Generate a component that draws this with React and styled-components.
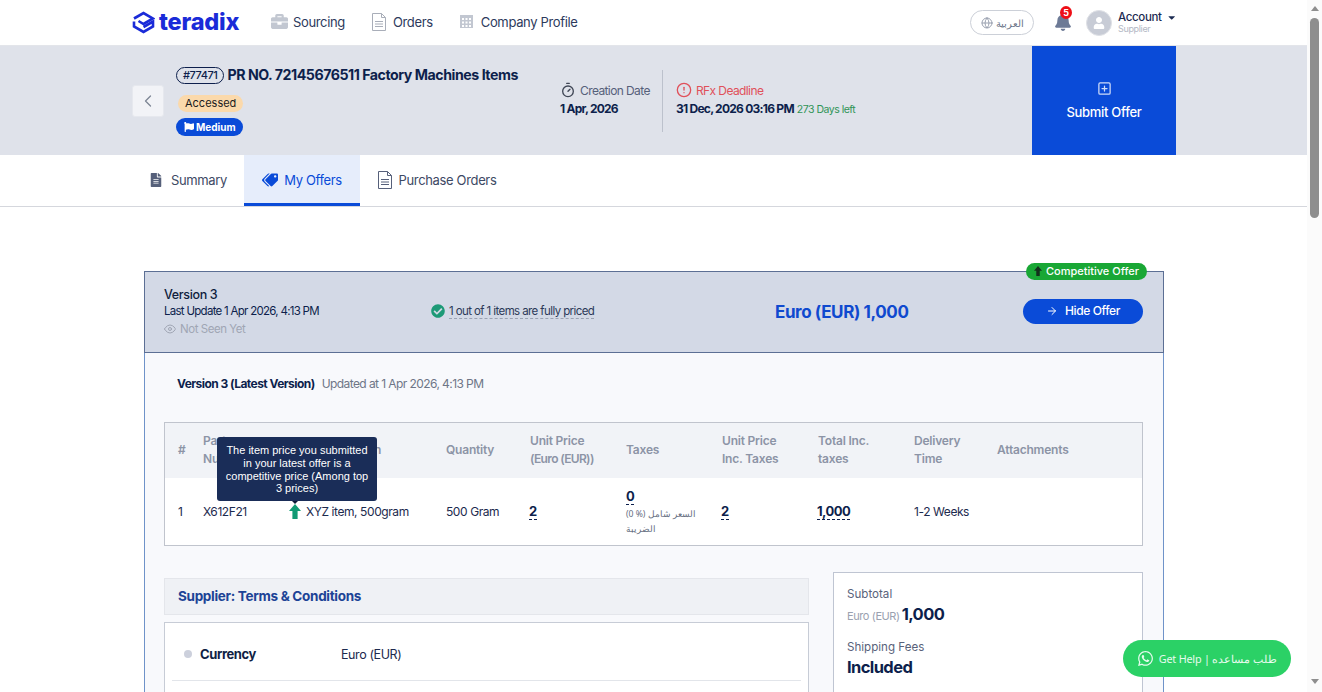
import styled, { createGlobalStyle } from "styled-components";
import { FaBriefcase, FaBell, FaCaretDown, FaCheckCircle, FaFileAlt, FaFlag, FaTags, FaUser, FaWhatsapp } from "react-icons/fa";
import { FiAlertCircle, FiArrowRight, FiChevronLeft, FiEye, FiGlobe, FiPlusSquare } from "react-icons/fi";
import { LuTimer } from "react-icons/lu";

const GlobalStyle = createGlobalStyle`
  body {
    margin: 0;
    background: #fff;
    color: #0d1f4c;
    font-family: "Inter", "Noto Sans", sans-serif;
    font-size: 12px;
    letter-spacing: -0.35px;
  }
  * { box-sizing: border-box; }
`;

const Shell = styled.div`
  display: flex;
  align-items: flex-start;
`;

const Main = styled.main`
  flex: 1;
  min-width: 0;
`;

const ScrollRail = styled.div`
  position: sticky;
  top: 0;
  flex: none;
  width: 15px;
  height: 692px;
  padding: 6px 3px 8px;
  background: #fbfbfb;
  display: flex;
  flex-direction: column;
  align-items: center;
`;

const RailArrow = styled.span`
  width: 0;
  height: 0;
  border-left: 4.5px solid transparent;
  border-right: 4.5px solid transparent;
  border-bottom: ${props => props.$down ? "0" : "5px solid #8e8e8e"};
  border-top: ${props => props.$down ? "5px solid #8e8e8e" : "0"};
  margin-top: ${props => props.$down ? "auto" : "0"};
`;

const RailThumb = styled.div`
  width: 9px;
  height: 200px;
  margin-top: 7px;
  border-radius: 5px;
  background: #8e8e8e;
`;

const Wrap = styled.div`
  width: 1044px;
  margin-left: 132px;
`;

const TopBar = styled.header`
  height: 46px;
  background: #fff;
  border-bottom: 1px solid #e3e5ea;
`;

const TopInner = styled(Wrap)`
  height: 45px;
  display: flex;
  align-items: center;
`;

const Logo = styled.div`
  display: flex;
  align-items: center;
  gap: 4px;
  width: 139px;
  color: #1a2bd8;
  font-size: 23.5px;
  font-weight: 800;
  letter-spacing: -0.2px;
  line-height: 1;
  & svg { flex: none; }
  & span { margin-top: -2px; }
`;

const Nav = styled.nav`
  display: flex;
  align-items: center;
  padding-bottom: 2px;
`;

const NavItem = styled.a`
  display: flex;
  align-items: center;
  gap: ${props => props.$gap || 7}px;
  margin-right: ${props => props.$space}px;
  font-size: 13px;
  color: #2d3a5c;
  & svg { color: #c2c7d1; flex: none; }
`;

const TopRight = styled.div`
  margin-left: auto;
  display: flex;
  align-items: center;
`;

const LangButton = styled.button`
  width: 64px;
  height: 25px;
  border: 1px solid #ccd0d8;
  border-radius: 13px;
  background: #fff;
  color: #6b7488;
  display: flex;
  align-items: center;
  justify-content: center;
  gap: 3px;
  font-family: "Noto Sans", sans-serif;
  font-size: 10px;
  padding: 0;
  & svg { color: #9aa1b0; }
`;

const BellWrap = styled.div`
  position: relative;
  margin-left: 20px;
  width: 18px;
  height: 20px;
  color: #6d7a96;
`;

const Badge = styled.span`
  position: absolute;
  top: -7px;
  left: 6px;
  width: 12px;
  height: 13px;
  border-radius: 50%;
  background: #ee0f17;
  color: #fff;
  font-size: 9px;
  font-weight: 700;
  text-align: center;
  line-height: 13px;
`;

const Avatar = styled.div`
  width: 26px;
  height: 26px;
  margin-left: 14px;
  border-radius: 50%;
  background: #c8ccd6;
  border: 1px solid #dfe1e6;
  color: #fff;
  display: flex;
  align-items: center;
  justify-content: center;
`;

const AccountBox = styled.div`
  margin-left: 6px;
  width: 58px;
  line-height: 1;
`;

const AccountName = styled.div`
  display: flex;
  align-items: center;
  gap: 5px;
  font-size: 11.5px;
  font-weight: 500;
  color: #1c2b52;
`;

const AccountRole = styled.div`
  margin-top: 1px;
  font-size: 9px;
  color: #b3b8c4;
`;

const SubHeader = styled.section`
  background: #dfe2ea;
  height: 109px;
`;

const SubInner = styled(Wrap)`
  height: 109px;
  display: flex;
  align-items: stretch;
`;

const BackButton = styled.button`
  align-self: center;
  width: 32px;
  height: 32px;
  margin-top: 1px;
  padding: 0;
  background: #f2f3f7;
  border: 1px solid #e6e8ee;
  border-radius: 3px;
  color: #7d8595;
  display: flex;
  align-items: center;
  justify-content: center;
`;

const TitleBlock = styled.div`
  margin-left: 12px;
  padding-top: 20px;
  width: 384px;
  display: flex;
  flex-direction: column;
  align-items: flex-start;
`;

const TitleRow = styled.div`
  display: flex;
  align-items: center;
  gap: 3px;
  font-size: 14.2px;
  font-weight: 700;
  line-height: 18px;
  letter-spacing: -0.47px;
  white-space: nowrap;
`;

const IdPill = styled.span`
  border: 1px solid #0d1f4c;
  border-radius: 9px;
  padding: 0 6px;
  height: 17px;
  font-size: 11px;
  font-weight: 500;
  line-height: 15px;
`;

const StatusPill = styled.div`
  margin: 11px 0 0 2px;
  height: 17px;
  padding: 0 7px;
  border-radius: 9px;
  background: #fbd9ab;
  color: #1b1b1b;
  font-size: 11px;
  line-height: 17px;
  letter-spacing: 0;
`;

const PriorityPill = styled.div`
  display: flex;
  align-items: center;
  gap: 2px;
  margin-top: 6px;
  height: 18px;
  padding: 0 7px 0 8px;
  border-radius: 9px;
  background: #0a4bd8;
  color: #fff;
  font-size: 10px;
  font-weight: 700;
  letter-spacing: 0;
`;

const DateBlock = styled.div`
  padding-top: 36px;
  width: ${props => props.$width ? props.$width + "px" : "auto"};
`;

const DateLabel = styled.div`
  display: flex;
  align-items: center;
  gap: 4px;
  font-size: 12px;
  height: 16px;
  letter-spacing: -0.6px;
  color: ${props => props.$danger ? "#e0505a" : "#56607a"};
  & svg { flex: none; }
`;

const DateValue = styled.div`
  margin-top: 3px;
  font-size: 12px;
  font-weight: 700;
  line-height: 16px;
  white-space: nowrap;
  letter-spacing: -0.75px;
`;

const DaysLeft = styled.span`
  margin-left: 3px;
  font-size: 10.5px;
  font-weight: 400;
  letter-spacing: -0.5px;
  color: #2f9457;
`;

const DateDivider = styled.div`
  align-self: center;
  width: 1px;
  height: 62px;
  margin: 0 13px 0 0;
  background: #bcc1cc;
`;

const SubmitButton = styled.button`
  margin-left: auto;
  width: 144px;
  border: 0;
  background: #0a4bd8;
  color: #fff;
  font-family: inherit;
  font-size: 13px;
  font-weight: 500;
  letter-spacing: -0.3px;
  display: flex;
  flex-direction: column;
  align-items: center;
  justify-content: center;
  gap: 8px;
  padding-bottom: 2px;
  & svg { color: #cfdcf8; }
`;

const TabBar = styled.div`
  height: 52px;
  border-bottom: 1px solid #d5d7dd;
`;

const TabInner = styled(Wrap)`
  display: flex;
  height: 51px;
`;

const Tab = styled.a`
  display: flex;
  align-items: center;
  justify-content: center;
  gap: ${props => props.$gap || 7}px;
  width: ${props => props.$width}px;
  font-size: 13px;
  color: ${props => props.$active ? "#0a4bd8" : "#3d4964"};
  background: ${props => props.$active ? "#e6edfb" : "transparent"};
  border-bottom: 3px solid ${props => props.$active ? "#0a4bd8" : "transparent"};
  padding-top: 1px;
  & svg { color: ${props => props.$active ? "#0a4bd8" : "#56607a"}; flex: none; }
`;

const FlippedTags = styled(FaTags)`
  transform: scaleX(-1);
`;

const Content = styled(Wrap)`
  padding: 64px 12px 0;
  height: 2190px;
`;

const Panel = styled.div`
  border: 1px solid #6f93c9;
  background: #f8f9fc;
  height: 100%;
`;

const PanelHead = styled.div`
  position: relative;
  margin: -1px;
  height: 82px;
  padding: 0 19px;
  background: #d3d9e6;
  border: 1px solid #5c6f94;
  display: flex;
  align-items: center;
`;

const CompetitiveBadge = styled.span`
  position: absolute;
  top: -9px;
  right: 16px;
  height: 17px;
  width: 121px;
  padding-bottom: 2px;
  border-radius: 9px;
  background: #19a735;
  color: #fff;
  display: flex;
  align-items: center;
  justify-content: center;
  gap: 4px;
  font-size: 11px;
  font-weight: 500;
  letter-spacing: 0;
  & svg { color: #13301c; }
`;

const VersionInfo = styled.div`
  width: 267px;
  line-height: 17px;
`;

const VersionName = styled.div`
  margin-top: -1px;
  font-size: 12.5px;
  font-weight: 500;
  color: #0f1d3d;
`;

const VersionDate = styled.div`
  font-size: 11.5px;
  letter-spacing: -0.72px;
`;

const NotSeen = styled.div`
  display: flex;
  align-items: center;
  gap: 4px;
  margin-top: 1px;
  font-size: 11.5px;
  color: #a0a6b4;
  letter-spacing: -0.45px;
`;

const PricedNote = styled.div`
  display: flex;
  align-items: center;
  gap: 4px;
  width: 344px;
  margin-top: -2px;
  font-size: 11.5px;
  letter-spacing: -0.6px;
  color: #2c3958;
  & svg { color: #1d9a77; }
`;

const DashedText = styled.span`
  border-bottom: 1px dashed ${props => props.$color || "#9aa2b3"};
`;

const PanelTotal = styled.div`
  font-size: 17px;
  font-weight: 700;
  letter-spacing: -0.4px;
  color: #0f49cf;
  margin-top: -1px;
`;

const HideButton = styled.button`
  position: absolute;
  top: 27px;
  right: 20px;
  width: 120px;
  height: 25px;
  padding: 0 0 2px;
  border: 0;
  border-radius: 13px;
  background: #0a4bd8;
  color: #fff;
  font-family: inherit;
  font-size: 12px;
  font-weight: 500;
  letter-spacing: -0.4px;
  display: flex;
  align-items: center;
  justify-content: center;
  gap: 7px;
`;

const PanelBody = styled.div`
  padding: 23px 20px 0 19px;
`;

const LatestLine = styled.div`
  margin-left: 13px;
  font-size: 12px;
  line-height: 18px;
  color: #6e7687;
  letter-spacing: -0.58px;
  & b { color: #0d1f4c; margin-right: 7px; font-weight: 700; letter-spacing: -0.55px; }
`;

const OfferTable = styled.div`
  margin-top: 29px;
  border: 1px solid #c0c4cd;
  background: #fff;
`;

const TableRow = styled.div`
  display: grid;
  grid-template-columns: 38px 85px 158px 84px 96px 96px 96px 96px 83px 1fr;
  align-items: center;
  height: ${props => props.$head ? 55 : 67}px;
  background: ${props => props.$head ? "#f1f3f7" : "#fff"};
`;

const HeadCell = styled.div`
  padding: 0 0 2px ${props => props.$pad || 0}px;
  font-size: 12px;
  font-weight: 600;
  line-height: 18px;
  letter-spacing: -0.2px;
  color: #8c94a6;
`;

const TightHead = styled.span`
  letter-spacing: -0.65px;
`;

const Cell = styled.div`
  position: relative;
  padding-left: ${props => props.$pad || 0}px;
  font-size: 12px;
  letter-spacing: -0.42px;
  color: #1c2a4e;
  display: ${props => props.$flex ? "flex" : "block"};
  align-items: center;
  gap: 5px;
`;

const ArrowMark = styled.span`
  position: relative;
  display: flex;
  color: #119a74;
`;

const Tooltip = styled.div`
  position: absolute;
  left: -72px;
  bottom: 18px;
  width: 160px;
  padding: 7px 5px 6px;
  border-radius: 3px;
  background: #1a2d58;
  color: #fff;
  font-family: "Liberation Sans", Arial, sans-serif;
  font-size: 11px;
  line-height: 12.7px;
  letter-spacing: 0;
  text-align: center;
  &::after {
    content: "";
    position: absolute;
    left: 75px;
    bottom: -3px;
    border: 3px solid transparent;
    border-bottom: 0;
    border-top-color: #0c1a38;
  }
`;

const Amount = styled.span`
  font-size: 13px;
  font-weight: 700;
  color: #0d1f4c;
  letter-spacing: -0.5px;
`;

const AmountCell = styled(Cell)`
  margin-top: -1px;
  margin-left: -1px;
  padding-left: 0;
`;

const TaxCell = styled(Cell)`
  margin-top: 1px;
`;

const TaxNote = styled.div`
  margin-top: 3px;
  width: 80px;
  font-size: 8.6px;
  line-height: 14.5px;
  color: #666e7f;
  font-family: "Noto Sans", sans-serif;
  letter-spacing: 0;
`;

const LowerGrid = styled.div`
  display: grid;
  grid-template-columns: 645px 310px;
  gap: 24px;
  margin-top: 26px;
`;

const TermsHead = styled.div`
  margin-top: 6px;
  height: 37px;
  padding-left: 13px;
  background: #eff1f5;
  border: 1px solid #e4e6eb;
  color: #1c4396;
  font-size: 13.5px;
  font-weight: 700;
  letter-spacing: -0.3px;
  line-height: 35px;
`;

const TermsBox = styled.div`
  margin-top: 7px;
  height: 300px;
  padding: 0 7px;
  background: #fff;
  border: 1px solid #c7ccd6;
`;

const TermRow = styled.div`
  display: flex;
  align-items: center;
  height: 58px;
  padding: 4px 0 0 12px;
  border-bottom: 1px solid #e2e5ea;
`;

const TermLabel = styled.div`
  display: flex;
  align-items: center;
  gap: 8px;
  width: 157px;
  font-size: 13px;
  font-weight: 700;
  letter-spacing: -0.4px;
  color: #101f45;
  &::before {
    content: "";
    width: 8px;
    height: 8px;
    border-radius: 50%;
    background: #ccd0dc;
  }
`;

const TermValue = styled.div`
  margin-top: 1px;
  font-size: 12.5px;
  letter-spacing: -0.4px;
  color: #1c2a4e;
`;

const SummaryBox = styled.div`
  height: 340px;
  padding: 13px 13px;
  background: #fff;
  border: 1px solid #bfc5d2;
`;

const SummaryLabel = styled.div`
  font-size: 11.6px;
  line-height: 16px;
  color: #59627a;
  letter-spacing: 0;
`;

const SummaryValue = styled.div`
  display: flex;
  align-items: baseline;
  gap: 2px;
  height: 24px;
  margin-bottom: 13px;
  font-size: 16.5px;
  font-weight: 700;
  line-height: 24px;
  letter-spacing: -0.6px;
  color: #0d1f4c;
  & small {
    font-size: 11px;
    font-weight: 400;
    letter-spacing: -0.4px;
    color: #9aa1b0;
  }
`;

const HelpButton = styled.a`
  position: fixed;
  right: 31px;
  bottom: 15px;
  width: 168px;
  height: 37px;
  border-radius: 19px;
  background: #2bd166;
  color: #e6fbee;
  display: flex;
  align-items: center;
  justify-content: center;
  gap: 5px;
  font-size: 10.8px;
  font-family: "Noto Sans", sans-serif;
  letter-spacing: -0.2px;
`;

const LogoMark = () => (
  <svg width="23" height="23" viewBox="0 0 23 23" fill="none" stroke="#1a2bd8" strokeWidth="2.6" strokeLinejoin="miter">
    <path d="M2 7.5 11.5 2 21 7.5 11.5 13 6.5 10" />
    <path d="M2 10.5 2 15.5 11.5 21 21 15.5 21 10.5 11.5 16" />
  </svg>
);

const DocIcon = ({ color }) => (
  <svg width="14" height="18" viewBox="0 0 14 18" fill="none" stroke={color} strokeWidth="1">
    <path d="M.5.5h9l4 4v13H.5z" />
    <path d="M9.5.5v4h4M3 8.5h8M3 11h8M3 13.5h8" />
  </svg>
);

const BuildingIcon = () => (
  <svg width="13" height="13" viewBox="0 0 13 13" fill="currentColor">
    <path fillRule="evenodd" d="M0 0h13v13H0zM2 3v2h2V3zm3.5 0v2h2V3zM9 3v2h2V3zM2 6.5v2h2v-2zm3.5 0v2h2v-2zm3.5 0v2h2v-2zM2 10v2h2v-2zm3.5 0v2h2v-2zM9 10v2h2v-2z" />
  </svg>
);

const FatArrow = ({ width, height }) => (
  <svg width={width} height={height} viewBox="0 0 12 15" fill="currentColor">
    <path d="M6 0 12 7H8.6V15H3.4V7H0z" />
  </svg>
);

export default function App() {
  return (
    <Shell>
      <GlobalStyle />
      <Main>
        <TopBar>
          <TopInner>
            <Logo><LogoMark /><span>teradix</span></Logo>
            <Nav>
              <NavItem $gap={5} $space={27}><FaBriefcase size={17} />Sourcing</NavItem>
              <NavItem $space={27}><DocIcon color="#a9aeb9" />Orders</NavItem>
              <NavItem $gap={8} $space={0}><BuildingIcon />Company Profile</NavItem>
            </Nav>
            <TopRight>
              <LangButton><FiGlobe size={12} />العربية</LangButton>
              <BellWrap>
                <FaBell size={18} />
                <Badge>5</Badge>
              </BellWrap>
              <Avatar><FaUser size={12} /></Avatar>
              <AccountBox>
                <AccountName>Account <FaCaretDown size={11} /></AccountName>
                <AccountRole>Supplier</AccountRole>
              </AccountBox>
            </TopRight>
          </TopInner>
        </TopBar>

        <SubHeader>
          <SubInner>
            <BackButton><FiChevronLeft size={20} strokeWidth={1.5} /></BackButton>
            <TitleBlock>
              <TitleRow>
                <IdPill>#77471</IdPill>
                PR NO. 72145676511 Factory Machines Items
              </TitleRow>
              <StatusPill>Accessed</StatusPill>
              <PriorityPill><FaFlag size={10} />Medium</PriorityPill>
            </TitleBlock>
            <DateBlock $width={102}>
              <DateLabel><LuTimer size={16} color="#3f4655" />Creation Date</DateLabel>
              <DateValue>1 Apr, 2026</DateValue>
            </DateBlock>
            <DateDivider />
            <DateBlock>
              <DateLabel $danger><FiAlertCircle size={16} />RFx Deadline</DateLabel>
              <DateValue>31 Dec, 2026 03:16 PM<DaysLeft>273 Days left</DaysLeft></DateValue>
            </DateBlock>
            <SubmitButton><FiPlusSquare size={15} />Submit Offer</SubmitButton>
          </SubInner>
        </SubHeader>

        <TabBar>
          <TabInner>
            <Tab $width={112} $gap={8}><FaFileAlt size={14} />Summary</Tab>
            <Tab $width={116} $active $gap={6}><FlippedTags size={16} />My Offers</Tab>
            <Tab $width={154}><DocIcon color="#56607a" />Purchase Orders</Tab>
          </TabInner>
        </TabBar>

        <Content>
          <Panel>
            <PanelHead>
              <CompetitiveBadge><FatArrow width={8} height={10} />Competitive Offer</CompetitiveBadge>
              <VersionInfo>
                <VersionName>Version 3</VersionName>
                <VersionDate>Last Update 1 Apr 2026, 4:13 PM</VersionDate>
                <NotSeen><FiEye size={12} />Not Seen Yet</NotSeen>
              </VersionInfo>
              <PricedNote>
                <FaCheckCircle size={14} />
                <DashedText>1 out of 1 items are fully priced</DashedText>
              </PricedNote>
              <PanelTotal>Euro (EUR) 1,000</PanelTotal>
              <HideButton><FiArrowRight size={12} />Hide Offer</HideButton>
            </PanelHead>
            <PanelBody>
              <LatestLine><b>Version 3 (Latest Version)</b>Updated at 1 Apr 2026, 4:13 PM</LatestLine>
              <OfferTable>
                <TableRow $head>
                  <HeadCell $pad={13}>#</HeadCell>
                  <HeadCell>Part<br />Number</HeadCell>
                  <HeadCell $pad={1}>Item Description</HeadCell>
                  <HeadCell>Quantity</HeadCell>
                  <HeadCell>Unit Price<br /><TightHead>(Euro (EUR))</TightHead></HeadCell>
                  <HeadCell>Taxes</HeadCell>
                  <HeadCell>Unit Price<br />Inc. Taxes</HeadCell>
                  <HeadCell>Total Inc.<br />taxes</HeadCell>
                  <HeadCell>Delivery<br />Time</HeadCell>
                  <HeadCell>Attachments</HeadCell>
                </TableRow>
                <TableRow>
                  <Cell $pad={13}>1</Cell>
                  <Cell>X612F21</Cell>
                  <Cell $flex $pad={1}>
                    <ArrowMark>
                      <FatArrow width={12} height={15} />
                      <Tooltip>The item price you submitted in your latest offer is a competitive price (Among top 3 prices)</Tooltip>
                    </ArrowMark>
                    XYZ item, 500gram
                  </Cell>
                  <Cell>500 Gram</Cell>
                  <AmountCell><DashedText $color="#0d1f4c"><Amount>2</Amount></DashedText></AmountCell>
                  <TaxCell>
                    <DashedText $color="#0d1f4c"><Amount>0</Amount></DashedText>
                    <TaxNote>(0 %) السعر شامل الضريبة</TaxNote>
                  </TaxCell>
                  <AmountCell><DashedText $color="#0d1f4c"><Amount>2</Amount></DashedText></AmountCell>
                  <AmountCell><DashedText $color="#0d1f4c"><Amount>1,000</Amount></DashedText></AmountCell>
                  <Cell>1-2 Weeks</Cell>
                  <Cell />
                </TableRow>
              </OfferTable>
              <LowerGrid>
                <div>
                  <TermsHead>Supplier: Terms &amp; Conditions</TermsHead>
                  <TermsBox>
                    <TermRow>
                      <TermLabel>Currency</TermLabel>
                      <TermValue>Euro (EUR)</TermValue>
                    </TermRow>
                  </TermsBox>
                </div>
                <SummaryBox>
                  <SummaryLabel>Subtotal</SummaryLabel>
                  <SummaryValue><small>Euro (EUR)</small>1,000</SummaryValue>
                  <SummaryLabel>Shipping Fees</SummaryLabel>
                  <SummaryValue>Included</SummaryValue>
                </SummaryBox>
              </LowerGrid>
            </PanelBody>
          </Panel>
        </Content>
      </Main>

      <ScrollRail>
        <RailArrow />
        <RailThumb />
        <RailArrow $down />
      </ScrollRail>

      <HelpButton><FaWhatsapp size={17} />Get Help | طلب مساعده</HelpButton>
    </Shell>
  );
}
